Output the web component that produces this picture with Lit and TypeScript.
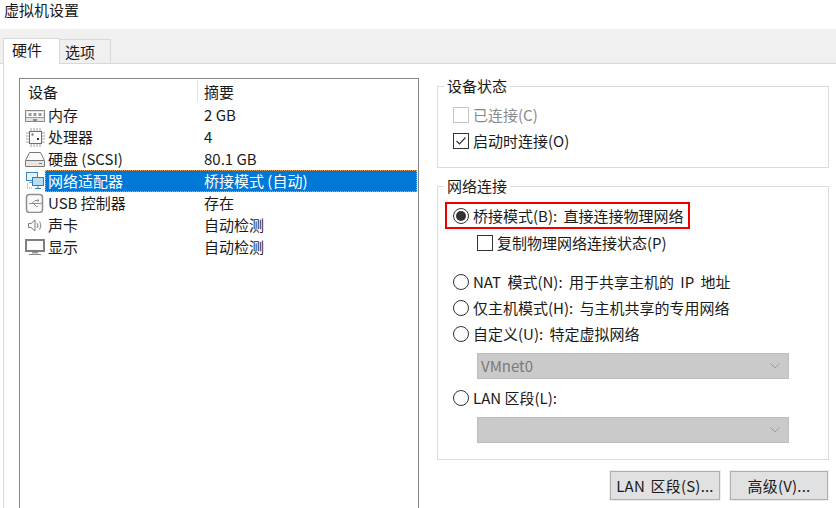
import { LitElement, html, css, svg } from "lit";
import { customElement } from "lit/decorators.js";

const icons: Record<string, unknown> = {
  mem: svg`<rect x=".500" y="5.500" width="19" height="11" fill="#e4e4e4" stroke="#8c8c8c"/><rect x="2" y="7" width="16" height="5" fill="#fff"/><path d="M3.500 8h3v3h-3zM8.500 8h3v3h-3zM13.500 8h3v3h-3z" fill="#9a9a9a"/><path d="M1 12.500h18" stroke="#9a9a9a"/><path d="M8 16h4v-2H8z" fill="#8c8c8c"/>`,
  cpu: svg`<rect x="4.500" y="4.500" width="12" height="12" fill="#fbfbfb" stroke="#6f6f6f"/><path d="M6 1v3M9 1v3M12 1v3M15 1v3M6 17v3M9 17v3M12 17v3M15 17v3M1 6h3M1 9h3M1 12h3M1 15h3M17 6h3M17 9h3M17 12h3M17 15h3" stroke="#a0a0a0"/><rect x="6.500" y="6.500" width="2" height="2" fill="#666"/><rect x="12" y="11" width="2" height="2" fill="#333"/>`,
  hdd: svg`<path d="M4.500 3.500h11l4 8v6H.5v-6z" fill="#fbfbfb" stroke="#787878"/><path d="M1 12h18v5H1z" fill="#e6e6e6"/><path d="M1 11.500h18" stroke="#787878"/><path d="M14 14.500h3" stroke="#777"/>`,
  net: svg`<rect x="1.500" y="1.500" width="11" height="8" fill="#e6f1fa" stroke="#3b87c4"/><path d="M7 9.500v2M4 11.500h6" stroke="#7aa6c8"/><rect x="7.500" y="6.500" width="11" height="8" fill="#b9dcf5" stroke="#2f7fc0"/><path d="M13 14.500v2.500M10 17.500h6" stroke="#2f7fc0"/><path d="M2 13h1M2 15h1M2 17h1M4 17h1M6 17h1" stroke="#7f9fb8"/>`,
  usb: svg`<rect x="1.500" y="1.500" width="16" height="18" rx="3" fill="#fafafa" stroke="#8f8f8f" stroke-width="1.500"/><path d="M4 10.500h11M7 10.500l3-3h2.500M8.500 10.500l3 3H13" fill="none" stroke="#8f8f8f"/><rect x="12" y="6.500" width="2" height="2" fill="#8f8f8f"/><path d="M15.500 9v3l1.500-1.500z" fill="#8f8f8f"/>`,
  snd: svg`<path d="M3.500 8.500h2.500l4-3.500v11l-4-3.500H3.500z" fill="#f8f8f8" stroke="#7e7e7e"/><path d="M12 8c1 1.500 1 3.500 0 5M14.500 6.500c1.500 2.500 1.500 5.500 0 8" fill="none" stroke="#9a9a9a" stroke-width="1.200"/>`,
  dsp: svg`<rect x="1" y="3" width="18" height="11" fill="#fcfcfc" stroke="#7f7f7f" stroke-width="2"/><path d="M7 15h6v1.500H7z" fill="#9a9a9a"/><path d="M4 17.500h12" stroke="#8a8a8a"/>`,
};

const rows = [
  ["mem", "内存", "2 GB"],
  ["cpu", "处理器", "4"],
  ["hdd", "硬盘 (SCSI)", "80.1 GB"],
  ["net", "网络适配器", "桥接模式 (自动)"],
  ["usb", "USB 控制器", "存在"],
  ["snd", "声卡", "自动检测"],
  ["dsp", "显示", "自动检测"],
];

@customElement("app-root")
export class AppRoot extends LitElement {
  static styles = css`
    :host {
      display: block; width: 836px; height: 508px; overflow: hidden; background: #fff; color: #1a1a1a;
      font-family: "Noto Sans CJK SC", "Liberation Sans", sans-serif; font-size: 15px; line-height: 22px;
    }
    * { box-sizing: border-box; }
    .title { height: 29px; padding: 0 0 0 4px; line-height: 20px; }
    .tabbar { height: 35px; background: #f0f0f0; border-bottom: 1px solid #d9d9d9; padding: 9px 0 0 3px; display: flex; align-items: flex-end; }
    .tab { width: 57px; height: 26px; margin-bottom: -1px; background: #fff; border: 1px solid #d9d9d9; border-bottom: 0; padding-left: 8px; line-height: 21px; position: relative; }
    .tab.off { width: 51px; height: 24px; background: #f0f0f0; border: 1px solid #d9d9d9; border-left: 0; margin-bottom: 0; border-bottom: 0; padding-left: 5px; line-height: 23px; }
    .body { display: flex; height: 445px; margin-left: 3px; border-left: 1px solid #d9d9d9; padding: 14px 7px 0 15px; }
    .list { width: 400px; height: 445px; flex: none; border: 1px solid #82878c; border-bottom: 0; padding: 1px 0 0 0; }
    .head { display: flex; height: 24px; line-height: 23px; }
    .h1 { width: 178px; padding-left: 8px; border-right: 1px solid #e5e5e5; height: 22px; }
    .h2 { padding-left: 6px; }
    .row { display: flex; height: 22px; align-items: center; line-height: 21px; }
    .row svg { width: 22px; height: 20px; flex: none; margin: 0 1px 0 5px; }
    .name { width: 156px; flex: none; height: 22px; white-space: nowrap; }
    .val { flex: 1; height: 22px; white-space: nowrap; }
    .sel { color: #fff; }
    .selwrap { flex: 1; display: flex; background: #0078d7; border: 1px dotted #e0a060; height: 22px; margin: 0 1px 0 -3px; padding-left: 2px; }
    .selwrap .name { height: 20px; line-height: 19px; }
    .selwrap .val { height: 20px; line-height: 19px; }
    .right { flex: 1; margin-left: 18px; display: flex; flex-direction: column; }
    fieldset { margin: 0; padding: 0; border: 1px solid #dcdcdc; min-width: 0; }
    legend { margin-left: -9px; padding: 0 3px; line-height: 16px; height: 16px; }
    .g1 { height: 90px; flex: none; padding: 8px 0 0 15px; }
    .g2 { height: 282px; flex: none; margin-top: 10px; padding: 8px 0 0 15px; }
    .line { display: flex; align-items: center; height: 26px; gap: 4px; white-space: nowrap; }
    .ws { word-spacing: 3px; }
    .box { width: 16px; height: 16px; border: 1px solid #333; flex: none; display: flex; }
    .box svg { width: 14px; height: 14px; }
    .dis { color: #8a8a8a; }
    .dis .box { border-color: #c4c4c4; }
    .radio { width: 16px; height: 16px; border: 1px solid #333; border-radius: 50%; flex: none; display: flex; align-items: center; justify-content: center; }
    .radio i { width: 10px; height: 10px; border-radius: 50%; background: #333; display: block; }
    .mark { margin-left: -8px; padding-left: 8px; width: 245px; outline: 2px solid #ee0000; outline-offset: -2px; height: 27px; }
    .sub { margin-left: 24px; margin-top: 1px; margin-bottom: 13px; }
    .combo { width: 312px; height: 26px; margin: 6px 0 6px 24px; background: #cacaca; border: 1px solid #bdbdbd; color: #7a7a7a; display: flex; align-items: center; justify-content: space-between; padding: 0 8px 0 3px; }
    .combo svg { width: 10px; height: 6px; }
    .btns { display: flex; justify-content: flex-end; gap: 10px; margin-top: 11px; padding-right: 1px; }
    .btn { height: 29px; border: 1px solid #b0b0b0; outline: 1px solid #eee; background: #e1e1e1; display: flex; align-items: center; justify-content: center; word-spacing: 2px; letter-spacing: .2px; }
    .b1 { width: 110px; }
    .b2 { width: 98px; }
  `;

  private chev() {
    return html`<svg viewBox="0 0 10 6"><path d="M.5.500 5 5 9.500.500" fill="none" stroke="#9a9a9a"/></svg>`;
  }

  render() {
    return html`
      <div class="title">虚拟机设置</div>
      <div class="tabbar"><div class="tab">硬件</div><div class="tab off">选项</div></div>
      <div class="body">
        <div class="list">
          <div class="head"><div class="h1">设备</div><div class="h2">摘要</div></div>
          ${rows.map(([ic, a, b]) => {
            const sel = ic === "net";
            return html`<div class="row ${sel ? "sel" : ""}">
              <svg viewBox="0 0 22 20">${icons[ic]}</svg>
              ${sel
                ? html`<div class="selwrap"><div class="name">${a}</div><div class="val">${b}</div></div>`
                : html`<div class="name">${a}</div><div class="val">${b}</div>`}
            </div>`;
          })}
        </div>
        <div class="right">
          <fieldset class="g1">
            <legend>设备状态</legend>
            <div class="line dis"><span class="box"></span>已连接(C)</div>
            <div class="line"><span class="box"><svg viewBox="0 0 14 14"><path d="M2.500 7l3 3 6-6.500" fill="none" stroke="#333" stroke-width="1.200"/></svg></span>启动时连接(O)</div>
          </fieldset>
          <fieldset class="g2">
            <legend>网络连接</legend>
            <div class="line mark ws"><span class="radio"><i></i></span>桥接模式(B): 直接连接物理网络</div>
            <div class="line sub"><span class="box"></span>复制物理网络连接状态(P)</div>
            <div class="line ws"><span class="radio"></span>NAT 模式(N): 用于共享主机的 IP 地址</div>
            <div class="line ws"><span class="radio"></span>仅主机模式(H): 与主机共享的专用网络</div>
            <div class="line ws"><span class="radio"></span>自定义(U): 特定虚拟网络</div>
            <div class="combo"><span>VMnet0</span>${this.chev()}</div>
            <div class="line"><span class="radio"></span>LAN 区段(L):</div>
            <div class="combo"><span></span>${this.chev()}</div>
          </fieldset>
          <div class="btns"><div class="btn b1">LAN 区段(S)...</div><div class="btn b2">高级(V)...</div></div>
        </div>
      </div>
    `;
  }
}
